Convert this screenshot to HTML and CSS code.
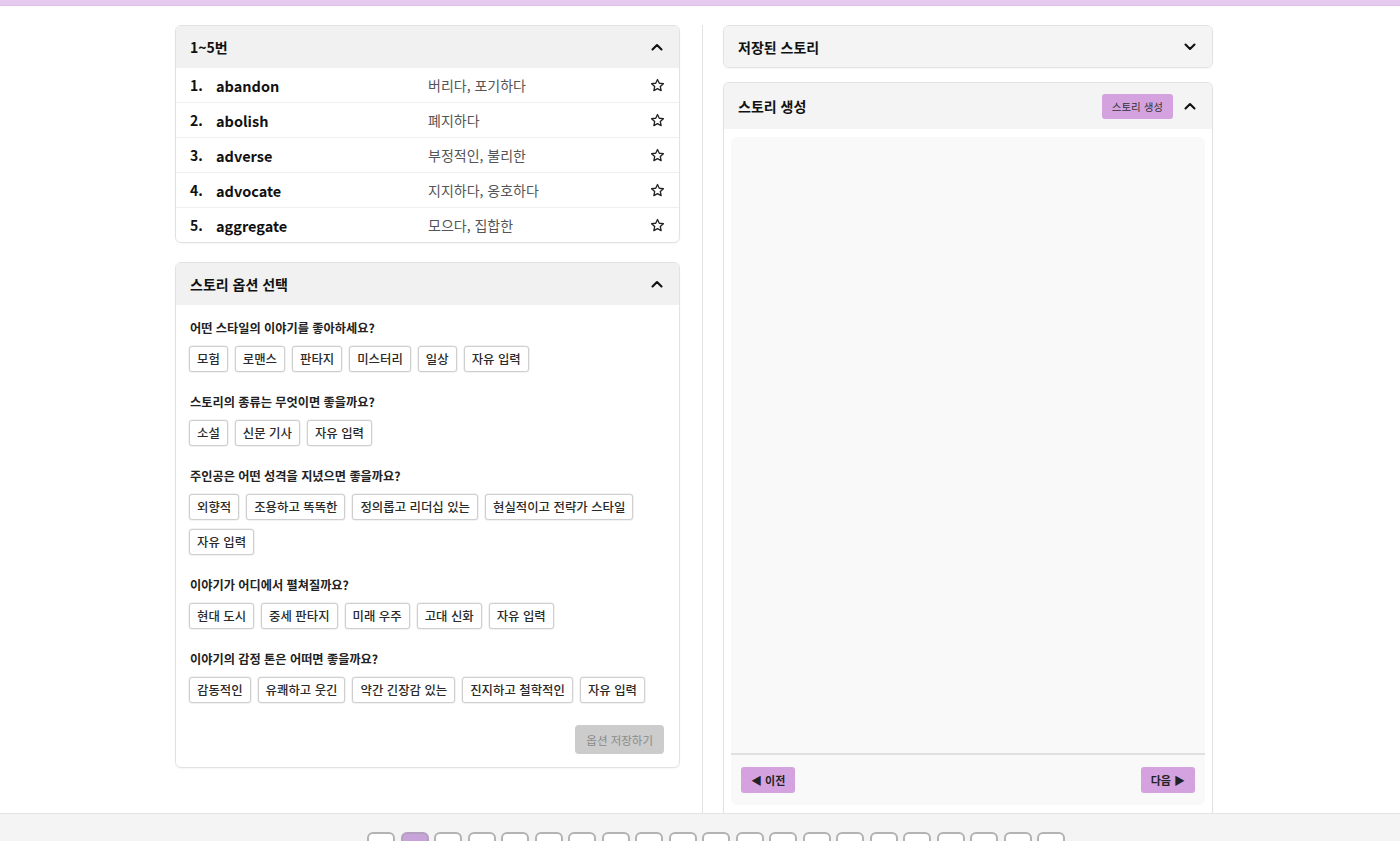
FILE: index.html
```html
<!DOCTYPE html>
<html lang="ko">
<head>
<meta charset="utf-8">
<title>단어 스토리</title>
<link rel="stylesheet" href="styles.css">
</head>
<body>
<div class="topbar"></div>
<main class="main">
  <section class="col col-left">
    <div class="card">
      <div class="card-head">
        <span class="card-title">1~5번</span>
        <svg class="chev" viewBox="0 0 12 8"><path d="M1.5 6.5 L6 2 L10.5 6.5"/></svg>
      </div>
      <ul class="words">
        <li class="word-row"><span class="num">1.</span><span class="word">abandon</span><span class="mean">버리다, 포기하다</span><svg class="star" viewBox="0 0 16 16"><path d="M8 1.6 L9.9 5.6 L14.3 6.1 L11 9.1 L11.9 13.5 L8 11.3 L4.1 13.5 L5 9.1 L1.7 6.1 L6.1 5.6 Z"/></svg></li>
        <li class="word-row"><span class="num">2.</span><span class="word">abolish</span><span class="mean">폐지하다</span><svg class="star" viewBox="0 0 16 16"><path d="M8 1.6 L9.9 5.6 L14.3 6.1 L11 9.1 L11.9 13.5 L8 11.3 L4.1 13.5 L5 9.1 L1.7 6.1 L6.1 5.6 Z"/></svg></li>
        <li class="word-row"><span class="num">3.</span><span class="word">adverse</span><span class="mean">부정적인, 불리한</span><svg class="star" viewBox="0 0 16 16"><path d="M8 1.6 L9.9 5.6 L14.3 6.1 L11 9.1 L11.9 13.5 L8 11.3 L4.1 13.5 L5 9.1 L1.7 6.1 L6.1 5.6 Z"/></svg></li>
        <li class="word-row"><span class="num">4.</span><span class="word">advocate</span><span class="mean">지지하다, 옹호하다</span><svg class="star" viewBox="0 0 16 16"><path d="M8 1.6 L9.9 5.6 L14.3 6.1 L11 9.1 L11.9 13.5 L8 11.3 L4.1 13.5 L5 9.1 L1.7 6.1 L6.1 5.6 Z"/></svg></li>
        <li class="word-row"><span class="num">5.</span><span class="word">aggregate</span><span class="mean">모으다, 집합한</span><svg class="star" viewBox="0 0 16 16"><path d="M8 1.6 L9.9 5.6 L14.3 6.1 L11 9.1 L11.9 13.5 L8 11.3 L4.1 13.5 L5 9.1 L1.7 6.1 L6.1 5.6 Z"/></svg></li>
      </ul>
    </div>

    <div class="card options">
      <div class="card-head">
        <span class="card-title">스토리 옵션 선택</span>
        <svg class="chev" viewBox="0 0 12 8"><path d="M1.5 6.5 L6 2 L10.5 6.5"/></svg>
      </div>
      <div class="opt-body">
        <div class="opt-group">
          <p class="question">어떤 스타일의 이야기를 좋아하세요?</p>
          <div class="chips"><span class="chip">모험</span><span class="chip">로맨스</span><span class="chip">판타지</span><span class="chip">미스터리</span><span class="chip">일상</span><span class="chip">자유 입력</span></div>
        </div>
        <div class="opt-group">
          <p class="question">스토리의 종류는 무엇이면 좋을까요?</p>
          <div class="chips"><span class="chip">소설</span><span class="chip">신문 기사</span><span class="chip">자유 입력</span></div>
        </div>
        <div class="opt-group">
          <p class="question">주인공은 어떤 성격을 지녔으면 좋을까요?</p>
          <div class="chips"><span class="chip">외향적</span><span class="chip">조용하고 똑똑한</span><span class="chip">정의롭고 리더십 있는</span><span class="chip">현실적이고 전략가 스타일</span><span class="chip">자유 입력</span></div>
        </div>
        <div class="opt-group">
          <p class="question">이야기가 어디에서 펼쳐질까요?</p>
          <div class="chips"><span class="chip">현대 도시</span><span class="chip">중세 판타지</span><span class="chip">미래 우주</span><span class="chip">고대 신화</span><span class="chip">자유 입력</span></div>
        </div>
        <div class="opt-group">
          <p class="question">이야기의 감정 톤은 어떠면 좋을까요?</p>
          <div class="chips"><span class="chip">감동적인</span><span class="chip">유쾌하고 웃긴</span><span class="chip">약간 긴장감 있는</span><span class="chip">진지하고 철학적인</span><span class="chip">자유 입력</span></div>
        </div>
        <div class="save-row"><button class="save-btn" type="button">옵션 저장하기</button></div>
      </div>
    </div>
  </section>

  <section class="col col-right">
    <div class="card saved">
      <div class="card-head">
        <span class="card-title">저장된 스토리</span>
        <svg class="chev" viewBox="0 0 12 8"><path d="M1.5 1.5 L6 6 L10.5 1.5"/></svg>
      </div>
    </div>
    <div class="card story">
      <div class="card-head story-head">
        <span class="card-title">스토리 생성</span>
        <div class="head-actions">
          <button class="gen-btn" type="button">스토리 생성</button>
          <svg class="chev" viewBox="0 0 12 8"><path d="M1.5 6.5 L6 2 L10.5 6.5"/></svg>
        </div>
      </div>
      <div class="story-body">
        <div class="story-panel">
          <div class="story-text"></div>
          <div class="story-nav">
            <button class="nav-btn" type="button">◀ 이전</button>
            <button class="nav-btn" type="button">다음 ▶</button>
          </div>
        </div>
      </div>
    </div>
  </section>
</main>
<footer class="pager">
  <button class="pg" type="button">‹</button>
  <button class="pg active" type="button">1</button>
  <button class="pg" type="button">2</button>
  <button class="pg" type="button">3</button>
  <button class="pg" type="button">4</button>
  <button class="pg" type="button">5</button>
  <button class="pg" type="button">6</button>
  <button class="pg" type="button">7</button>
  <button class="pg" type="button">8</button>
  <button class="pg" type="button">9</button>
  <button class="pg" type="button">10</button>
  <button class="pg" type="button">11</button>
  <button class="pg" type="button">12</button>
  <button class="pg" type="button">13</button>
  <button class="pg" type="button">14</button>
  <button class="pg" type="button">15</button>
  <button class="pg" type="button">16</button>
  <button class="pg" type="button">17</button>
  <button class="pg" type="button">18</button>
  <button class="pg" type="button">19</button>
  <button class="pg" type="button">20</button>
</footer>
</body>
</html>
```

FILE: styles.css
```css
* { box-sizing: border-box; }
html, body { margin: 0; padding: 0; }
body {
  font-family: "Noto Sans CJK KR", "Noto Sans", sans-serif;
  color: #222;
  background: #fff;
  overflow: hidden;
}
.topbar {
  height: 6px;
  background: #e6c9ef;
  border-bottom: 1px solid #dbbde5;
}
.main {
  display: flex;
  height: 807px;
  padding: 19px 0 0 175px;
  overflow: hidden;
}
.col { display: flex; flex-direction: column; }
.col-left {
  width: 528px;
  padding-right: 22px;
  border-right: 1px solid #e2e2e2;
  gap: 19px;
}
.col-right {
  width: 510px;
  padding-left: 20px;
  gap: 14px;
}
.card {
  border: 1px solid #e2e2e2;
  border-radius: 6px;
  background: #fff;
  overflow: hidden;
  box-shadow: 0 1px 2px rgba(0,0,0,0.04);
}
.card-head {
  height: 42px;
  background: #f1f1f1;
  display: flex;
  align-items: center;
  justify-content: space-between;
  padding: 0 16px 0 14px;
}
.card-title { font-size: 14px; font-weight: 700; color: #111; }
.chev {
  width: 12px; height: 8px;
  fill: none; stroke: #111; stroke-width: 2.1;
  stroke-linecap: round; stroke-linejoin: round;
}
.words { list-style: none; margin: 0; padding: 0; }
.word-row {
  display: grid;
  grid-template-columns: 26px 212px 1fr 18px;
  align-items: center;
  height: 35px;
  padding: 0 14px 0 14px;
  border-top: 1px solid #efefef;
}
.word-row:first-child { border-top: 0; height: 34px; }
.num { font-size: 14px; font-weight: 700; color: #111; }
.word { font-size: 14.5px; font-weight: 700; color: #111; }
.mean { font-size: 14px; color: #555; }
.star {
  width: 15px; height: 15px;
  fill: none; stroke: #222; stroke-width: 1.4; stroke-linejoin: round;
  justify-self: end;
}
.opt-body { padding: 14px 15px 13px 13px; }
.opt-group { margin-bottom: 21px; }
.question {
  margin: 0 0 9px 1px;
  font-size: 12.2px;
  line-height: 18px;
  font-weight: 700;
  color: #222;
}
.chips { display: flex; flex-wrap: wrap; gap: 9px 7px; }
.chip {
  display: inline-flex;
  align-items: center;
  height: 26px;
  padding: 0 7px;
  border: 1px solid #cfcfcf;
  border-radius: 3px;
  font-size: 12.4px;
  font-weight: 500;
  color: #2a2a2a;
  background: #fff;
  box-shadow: 0 0 0 0.5px #e5e5e5;
}
.save-row { display: flex; justify-content: flex-end; margin-top: 22px; }
.opt-group:last-of-type { margin-bottom: 0; }
.save-btn {
  font-family: inherit;
  height: 29px;
  padding: 0 11px;
  border: 0;
  border-radius: 4px;
  background: #cccccc;
  color: #8a8a8a;
  font-size: 11.5px;
}
.saved .card-head { height: 41px; background: #f4f4f4; }
.story { flex: 1; display: flex; flex-direction: column; border-bottom: 0; border-radius: 6px 6px 0 0; }
.story-head { height: 46px; background: #f4f4f4; }
.head-actions { display: flex; align-items: center; gap: 11px; }
.gen-btn {
  font-family: inherit;
  height: 25px;
  padding: 0 10px;
  border: 0;
  border-radius: 3px;
  background: #d4a3df;
  color: #333;
  font-size: 10.5px;
}
.story-body { flex: 1; padding: 8px 7px 8px 7px; display: flex; }
.story-panel {
  flex: 1;
  background: #f9f9f9;
  border-radius: 6px;
  display: flex;
  flex-direction: column;
}
.story-text { flex: 1; border-bottom: 2px solid #e0e0e0; }
.story-nav {
  height: 50px;
  display: flex;
  align-items: flex-start;
  justify-content: space-between;
  padding: 12px 10px 0 10px;
}
.nav-btn {
  font-family: inherit;
  height: 26px;
  padding: 0 10px;
  border: 0;
  border-radius: 3px;
  background: #d4a3df;
  color: #222;
  font-size: 11px;
  font-weight: 700;
}
.pager {
  height: 60px;
  background: #f4f4f4;
  border-top: 1px solid #e3e3e3;
  display: flex;
  gap: 5.5px;
  padding: 18px 0 0 367px;
}
.pg {
  font-family: inherit;
  width: 28px;
  height: 28px;
  padding: 0;
  border: 2px solid #b3b3b3;
  border-radius: 6px;
  background: #fff;
  color: #333;
  font-size: 12px;
}
.pg.active { background: #c7a3da; border-color: #b39fc0; color: #333; }
```
